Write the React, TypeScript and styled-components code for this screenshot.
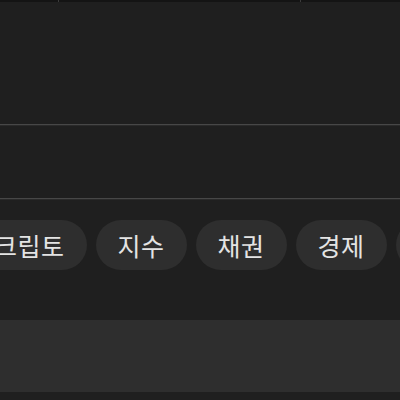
import React from "react";
import styled, { createGlobalStyle } from "styled-components";

const GlobalStyle = createGlobalStyle`
  html, body {
    margin: 0;
    padding: 0;
    background: #1f1f1f;
    overflow: hidden;
  }
  body {
    font-family: "Noto Sans CJK KR", "Noto Sans", sans-serif;
    color: #e4e4e4;
  }
`;

const categories = ["크립토", "지수", "채권", "경제", "원자재"];

const App: React.FC = () => {
  return (
    <>
      <GlobalStyle />
      <Page>
        <TopStrip>
          <StripCell width={58} />
          <StripCell width={242} />
          <StripCell width={100} />
        </TopStrip>
        <Section height={122} />
        <Divider />
        <Section height={72} />
        <Divider />
        <ChipScroller>
          <ChipTrack>
            {categories.map((c) => (
              <Chip key={c}>{c}</Chip>
            ))}
          </ChipTrack>
        </ChipScroller>
        <BottomBand />
      </Page>
    </>
  );
};

const Page = styled.div`
  width: 400px;
  height: 400px;
  display: flex;
  flex-direction: column;
  overflow: hidden;
`;

const TopStrip = styled.div`
  display: flex;
  height: 2px;
  gap: 1px;
  background: #3c3c3c;
`;

const StripCell = styled.div<{ width: number }>`
  flex: ${(p) => p.width} 0 0;
  background: #141414;
`;

const Section = styled.div<{ height: number }>`
  height: ${(p) => p.height}px;
  flex-shrink: 0;
`;

const Divider = styled.div`
  height: 1px;
  flex-shrink: 0;
  background: #474747;
  border-bottom: 1px solid #2a2a2a;
`;

const ChipScroller = styled.div`
  overflow: hidden;
  padding: 20px 0 50px;
`;

const ChipTrack = styled.div`
  display: flex;
  gap: 9px;
  margin-left: -28px;
`;

const Chip = styled.div`
  flex-shrink: 0;
  height: 50px;
  padding: 0 22px;
  border-radius: 25px;
  background: #2e2e2e;
  display: flex;
  align-items: center;
  font-size: 25px;
  letter-spacing: 0.5px;
  color: #e4e4e4;
`;

const BottomBand = styled.div`
  height: 72px;
  flex-shrink: 0;
  background: #2e2e2e;
`;

export default App;
